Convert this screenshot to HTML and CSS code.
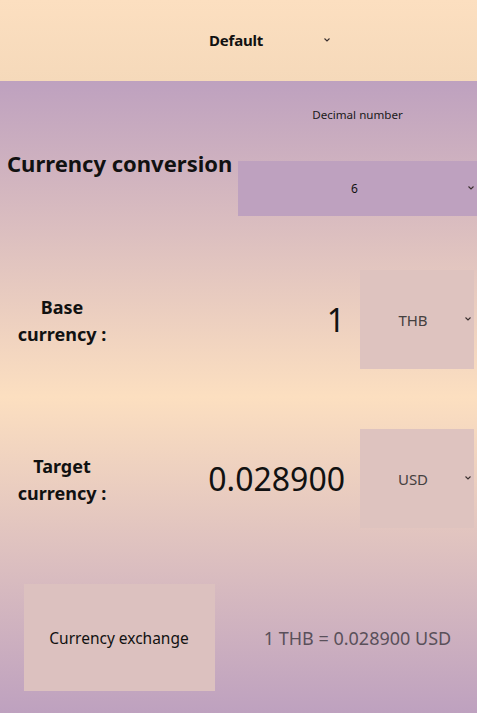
FILE: index.html
```html
<!DOCTYPE html>
<html lang="en">
<head>
<meta charset="utf-8">
<title>Currency conversion</title>
<link rel="stylesheet" href="styles.css">
</head>
<body>
<header class="topbar">
  <div class="theme-select">
    <span class="theme-text">Default</span>
    <svg class="chev" width="6" height="4" viewBox="0 0 6 4"><polyline points="0.5,0.5 3,3 5.5,0.5" fill="none" stroke="#3a3030" stroke-width="1.1"/></svg>
  </div>
</header>
<main class="app">
  <section class="row-head">
    <h1 class="title">Currency conversion</h1>
    <div class="decimal">
      <div class="decimal-label">Decimal number</div>
      <div class="decimal-select">
        <span class="decimal-value">6</span>
        <svg class="chev chev-right" width="6" height="4" viewBox="0 0 6 4"><polyline points="0.5,0.5 3,3 5.5,0.5" fill="none" stroke="#3a3030" stroke-width="1.1"/></svg>
      </div>
    </div>
  </section>

  <section class="row-cur row-base">
    <div class="cur-label">Base<br>currency :</div>
    <div class="cur-value">1</div>
    <div class="cur-select">
      <span class="cur-code">THB</span>
      <svg class="chev chev-right" width="6" height="4" viewBox="0 0 6 4"><polyline points="0.5,0.5 3,3 5.5,0.5" fill="none" stroke="#3a3030" stroke-width="1.1"/></svg>
    </div>
  </section>

  <section class="row-cur row-target">
    <div class="cur-label">Target<br>currency :</div>
    <div class="cur-value">0.028900</div>
    <div class="cur-select">
      <span class="cur-code">USD</span>
      <svg class="chev chev-right" width="6" height="4" viewBox="0 0 6 4"><polyline points="0.5,0.5 3,3 5.5,0.5" fill="none" stroke="#3a3030" stroke-width="1.1"/></svg>
    </div>
  </section>

  <section class="row-bottom">
    <div class="btn-cell"><button class="exchange-btn">Currency exchange</button></div>
    <div class="result">1 THB = 0.028900 USD</div>
  </section>
</main>
</body>
</html>
```
FILE: styles.css
```css
* { box-sizing: border-box; }
html, body { margin: 0; padding: 0; }
body {
  width: 477px;
  height: 713px;
  overflow: hidden;
  font-family: "Noto Sans", "Open Sans", sans-serif;
  color: #111;
}
.topbar {
  height: 81px;
  background: linear-gradient(to bottom, #fcdfc0, #f5d9ba);
  display: flex;
  align-items: center;
  padding-left: 209px;
}
.theme-select {
  display: flex;
  align-items: center;
  width: 121px;
  justify-content: space-between;
  padding-bottom: 1px;
}
.theme-text {
  font-weight: 700;
  font-size: 15px;
  letter-spacing: -0.2px;
}
.theme-select .chev { margin-top: -1px; }
.chev { display: block; }

.app {
  height: 632px;
  background: linear-gradient(to bottom, #bea1bf 0%, #fcdfc0 50%, #bea1bf 100%);
  display: flex;
  flex-direction: column;
}
.row-head {
  display: grid;
  grid-template-columns: 238px 239px;
  height: 135px;
}
.title {
  margin: 0;
  padding: 67px 0 0 7px;
  font-size: 22px;
  font-weight: 700;
  line-height: 30px;
  letter-spacing: 0;
  white-space: nowrap;
}
.decimal {
  display: flex;
  flex-direction: column;
  padding-top: 24px;
}
.decimal-label {
  height: 20px;
  line-height: 20px;
  font-size: 11.6px;
  text-align: center;
  color: #1a1a1a;
}
.decimal-select {
  margin-top: 36px;
  height: 55px;
  background: #bea1bf;
  display: flex;
  align-items: center;
  justify-content: center;
  position: relative;
}
.decimal-value { font-size: 12px; color: #111; margin-left: -6px; }
.chev-right {
  position: absolute;
  right: 3px;
  top: 50%;
  margin-top: -3px;
}
.row-cur {
  display: flex;
  align-items: center;
  height: 99px;
  padding-right: 3px;
}
.row-base { margin-top: 54px; }
.row-target { margin-top: 60px; }
.cur-label {
  width: 124px;
  text-align: center;
  font-weight: 700;
  font-size: 18px;
  line-height: 27px;
  letter-spacing: 0;
  padding-top: 2px;
}
.cur-value {
  flex: 1;
  text-align: right;
  font-size: 32px;
  padding-right: 15px;
  color: #111;
}
.cur-select {
  width: 114px;
  height: 99px;
  background: #dec3bf;
  display: flex;
  align-items: center;
  justify-content: center;
  position: relative;
}
.cur-code {
  font-size: 15px;
  color: #454040;
  margin-left: -8px;
}
.row-bottom {
  margin-top: 56px;
  display: grid;
  grid-template-columns: 238px 239px;
  align-items: center;
  height: 107px;
}
.btn-cell { display: flex; justify-content: center; }
.exchange-btn {
  width: 191px;
  height: 107px;
  border: none;
  background: #dcc1bf;
  font-family: inherit;
  font-size: 15.5px;
  color: #111;
  padding: 0;
}
.result {
  text-align: center;
  font-size: 18px;
  color: #5a505a;
}
```
